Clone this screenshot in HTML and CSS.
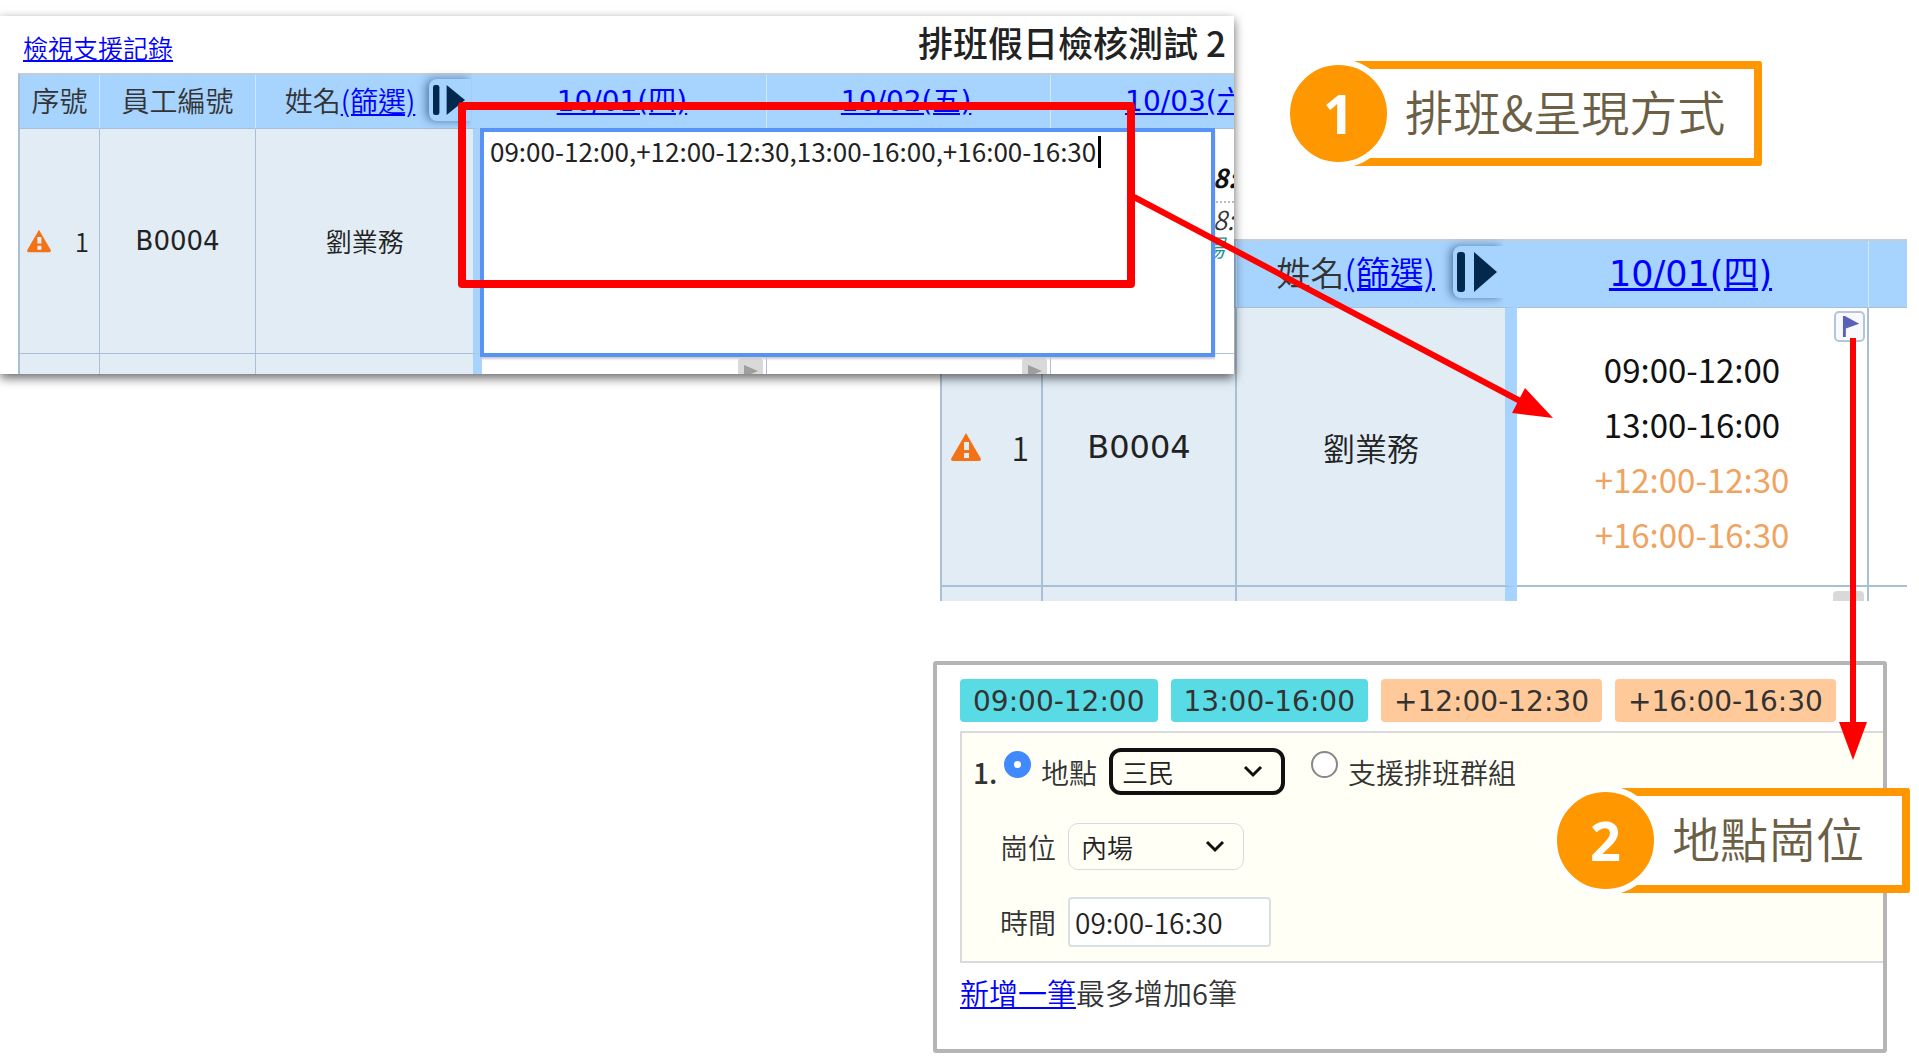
FILE: index.html
```
<!DOCTYPE html>
<html lang="zh-Hant">
<head>
    <meta charset="UTF-8">
    <meta name="viewport" content="width=device-width, initial-scale=1.0">
    <title>排班&amp;呈現方式</title>
    <link rel="stylesheet" href="styles.css">
</head>
<body>
<main class="slide">

    <!-- 排班結果 -->
    <section class="result">
        <table class="schedule schedule-large">
            <colgroup>
                <col class="col-no"><col class="col-id"><col class="col-name"><col class="col-day"><col>
            </colgroup>
            <thead>
                <tr>
                    <th></th>
                    <th></th>
                    <th class="name">
                        <div class="name-head">
                            <span>姓名<a href="#">(篩選)</a></span>
                            <button class="expand" aria-label="展開">
                                <svg viewBox="0 0 40 40" preserveAspectRatio="none"><rect x="0" y="0" width="8" height="40" rx="3"/><path d="M17 0l23 20-23 20z"/></svg>
                            </button>
                        </div>
                    </th>
                    <th class="day"><a href="#">10/01(四)</a></th>
                    <th></th>
                </tr>
            </thead>
            <tbody>
                <tr class="person">
                    <td class="fixed">
                        <div class="no">
                            <svg class="warn" viewBox="0 0 32 30"><path d="M16 1L31 27q0 2-2 2H3q-2 0-2-2z"/><path class="mark" d="M14 10h5v8h-5zM14 21h5v5h-5z"/></svg>
                            <span>1</span>
                        </div>
                    </td>
                    <td class="fixed code">B0004</td>
                    <td class="fixed name">劉業務</td>
                    <td class="shift">
                        <button class="flag" aria-label="地點崗位">
                            <svg viewBox="0 0 20 24"><path d="M1 1h2l15 8-14 5v9H1z"/></svg>
                        </button>
                        <p>09:00-12:00</p>
                        <p>13:00-16:00</p>
                        <p class="plus">+12:00-12:30</p>
                        <p class="plus">+16:00-16:30</p>
                    </td>
                    <td></td>
                </tr>
                <tr class="next">
                    <td class="fixed"></td>
                    <td class="fixed"></td>
                    <td class="fixed name"></td>
                    <td class="shift"><button class="more" aria-label="更多"></button></td>
                    <td></td>
                </tr>
            </tbody>
        </table>
    </section>

    <!-- 排班輸入 -->
    <section class="editor">
        <header class="editor-head">
            <a href="#">檢視支援記錄</a>
            <h1>排班假日檢核測試 2</h1>
        </header>
        <table class="schedule">
            <colgroup>
                <col class="col-no"><col class="col-id"><col class="col-name"><col class="col-day"><col class="col-day"><col class="col-day">
            </colgroup>
            <thead>
                <tr>
                    <th>序號</th>
                    <th>員工編號</th>
                    <th class="name">
                        <div class="name-head">
                            <span>姓名<a href="#">(篩選)</a></span>
                            <button class="expand" aria-label="展開">
                                <svg viewBox="0 0 40 40" preserveAspectRatio="none"><rect x="0" y="0" width="8" height="40" rx="3"/><path d="M17 0l23 20-23 20z"/></svg>
                            </button>
                        </div>
                    </th>
                    <th class="day"><a href="#">10/01(四)</a></th>
                    <th class="day"><a href="#">10/02(五)</a></th>
                    <th class="day"><a href="#">10/03(六)</a></th>
                </tr>
            </thead>
            <tbody>
                <tr class="person">
                    <td class="fixed">
                        <div class="no">
                            <svg class="warn" viewBox="0 0 32 30"><path d="M16 1L31 27q0 2-2 2H3q-2 0-2-2z"/><path class="mark" d="M14 10h5v8h-5zM14 21h5v5h-5z"/></svg>
                            <span>1</span>
                        </div>
                    </td>
                    <td class="fixed code">B0004</td>
                    <td class="fixed name">劉業務</td>
                    <td></td>
                    <td></td>
                    <td class="old-shift">
                        <p class="old-main">8:</p>
                        <p class="old-sub">8:</p>
                        <p class="old-place">場</p>
                    </td>
                </tr>
                <tr class="next">
                    <td class="fixed"></td>
                    <td class="fixed"></td>
                    <td class="fixed name"></td>
                    <td class="shift"><button class="more" aria-label="更多"></button></td>
                    <td class="shift"><button class="more" aria-label="更多"></button></td>
                    <td></td>
                </tr>
            </tbody>
        </table>
        <textarea class="shift-input" aria-label="班別" spellcheck="false">09:00-12:00,+12:00-12:30,13:00-16:00,+16:00-16:30</textarea>
        <span class="caret"></span>
    </section>

    <!-- 地點崗位設定 -->
    <section class="place">
        <div class="chips">
            <span class="chip">09:00-12:00</span>
            <span class="chip">13:00-16:00</span>
            <span class="chip chip-plus">+12:00-12:30</span>
            <span class="chip chip-plus">+16:00-16:30</span>
        </div>
        <form class="place-form">
            <div class="line">
                <b>1.</b>
                <input type="radio" name="kind" id="kind-place" checked>
                <label for="kind-place">地點</label>
                <select class="focused" aria-label="地點"><option>三民</option></select>
                <input type="radio" name="kind" id="kind-group">
                <label for="kind-group">支援排班群組</label>
            </div>
            <div class="line indent">
                <label for="post">崗位</label>
                <select id="post"><option>內場</option></select>
            </div>
            <div class="line indent">
                <label for="time">時間</label>
                <input type="text" id="time" value="09:00-16:30">
            </div>
        </form>
        <p class="add"><a href="#">新增一筆</a>最多增加6筆</p>
    </section>

    <!-- 標註 -->
    <div class="callout callout-one">
        <span class="number">1</span>
        <h2>排班&amp;呈現方式</h2>
    </div>
    <div class="callout callout-two">
        <span class="number">2</span>
        <h2>地點崗位</h2>
    </div>

    <!-- 紅框與箭頭 -->
    <svg class="marks" width="1919" height="1056" viewBox="0 0 1919 1056">
        <rect x="462" y="106" width="669" height="178"/>
        <path d="M1134 197L1522 402M1853 338V725"/>
        <path class="head" d="M1553 418L1512 413L1525 388zM1853 760L1839 722H1867z"/>
    </svg>
</main>
</body>
</html>
```
FILE: styles.css
```
* {
    box-sizing: border-box;
}

body {
    margin: 0;
    background: #fff;
    color: #333;
    font-family: "Noto Sans CJK TC", "Noto Sans", sans-serif;
    font-size: 28px;
    font-weight: 350;
}

a {
    color: #0000ff;
}

p, h1, h2 {
    margin: 0;
}

button, select, input, textarea {
    font-family: inherit;
    font-weight: inherit;
    color: inherit;
}

.slide {
    position: relative;
    min-height: 100vh;
    overflow: hidden;
}

/* 班表 */
.schedule {
    width: 1317px;
    table-layout: fixed;
    border-spacing: 0;
    border-left: 2px solid #a9bfd5;
    border-top: 2px solid #c4ccd4;
}

.schedule th,
.schedule td {
    padding: 0;
    border-right: 1px solid #a9bfd5;
    border-bottom: 1px solid #a9bfd5;
    text-align: center;
    font-weight: 350;
    line-height: 1;
}

.schedule th {
    height: 54px;
    padding-bottom: 4px;
    background: #a7d3ff;
    border-right-color: #d3e8fc;
}

.schedule .day {
    padding: 0 4px 0 0;
}

.schedule .day,
.schedule .code {
    font-family: "DejaVu Sans", "Noto Sans CJK TC", sans-serif;
    font-weight: 400;
}

.schedule .name {
    border-right: 9px solid #a7d3ff;
}

.schedule .fixed {
    background: #e1ecf5;
    color: #222;
}

.col-no { width: 80px; }
.col-id { width: 156px; }
.col-name { width: 226px; }
.col-day { width: 284px; }

.person td {
    height: 225px;
    font-size: 26px;
}

.next td {
    height: 40px;
    vertical-align: top;
}

.name-head {
    display: flex;
    align-items: center;
    justify-content: flex-end;
    gap: 14px;
    padding-right: 2px;
}

.expand {
    flex: none;
    width: 42px;
    height: 42px;
    padding: 6px 6px 6px 4px;
    border: 0;
    border-radius: 8px 0 0 8px;
    background: #a7d3ff;
    box-shadow: -3px 0 8px rgba(0, 40, 80, .5);
    clip-path: inset(-10px 0 -10px -14px);
}

.expand svg {
    display: block;
    width: 100%;
    height: 100%;
    fill: #00294d;
}

.no {
    display: flex;
    align-items: center;
    justify-content: space-between;
    padding: 0 10px 0 6px;
}

.warn {
    width: 26px;
    height: 24px;
    fill: #f37216;
}

.warn .mark {
    fill: #e1ecf5;
}

.shift {
    position: relative;
}

.more {
    position: absolute;
    top: 4px;
    right: 3px;
    width: 25px;
    height: 26px;
    padding: 0;
    border: 0;
    border-radius: 4px;
    background: #d9d9d9;
}

.more::after {
    content: "";
    display: block;
    width: 0;
    margin-left: 6px;
    border-left: 14px solid #9e9e9e;
    border-top: 6px solid transparent;
    border-bottom: 6px solid transparent;
}

/* 輸入畫面 */
.editor {
    position: absolute;
    left: 0;
    top: 16px;
    width: 1234px;
    height: 358px;
    overflow: hidden;
    background: #fff;
    box-shadow: 0 4px 10px rgba(0, 0, 0, .6);
}

.editor-head {
    display: flex;
    align-items: flex-start;
    height: 57px;
    padding-left: 23px;
    white-space: nowrap;
}

.editor-head a {
    flex: none;
    width: 895px;
    font-size: 25px;
    line-height: 62px;
}

.editor-head h1 {
    color: #222;
    font-size: 35px;
    font-weight: 500;
    line-height: 52px;
}

.editor .schedule {
    margin-left: 18px;
}

.schedule .old-shift {
    padding: 32px 0 0 150px;
    text-align: left;
    vertical-align: top;
    font-style: italic;
    line-height: 32px;
}

.old-main {
    padding: 0 0 8px 12px;
    border-bottom: 2px dotted #bbb;
    color: #111;
    font-weight: 700;
}

.old-sub {
    padding-left: 12px;
}

.old-place {
    color: #1b9090;
    font-size: 24px;
    line-height: 24px;
}

.shift-input {
    position: absolute;
    left: 480px;
    top: 112px;
    width: 735px;
    height: 229px;
    padding: 0 6px;
    border: 4px solid #5793f6;
    outline: 0;
    resize: none;
    background: #fff;
    box-shadow: 0 2px 2px #ccc;
    color: #222;
    font-size: 26px;
    font-weight: 400;
    line-height: 38px;
}

.caret {
    position: absolute;
    left: 1098px;
    top: 120px;
    width: 3px;
    height: 32px;
    background: #000;
}

/* 結果畫面 */
.result {
    position: absolute;
    left: 940px;
    right: 12px;
    top: 239px;
    height: 362px;
    overflow: hidden;
}

.schedule-large {
    width: 100%;
}

.schedule-large .col-no { width: 101px; }
.schedule-large .col-id { width: 194px; }
.schedule-large .col-name { width: 280px; }
.schedule-large .col-day { width: 352px; }

.schedule-large th {
    height: 67px;
    font-size: 34px;
}

.schedule-large .day {
    font-size: 35px;
}

.schedule-large td {
    border-right-width: 2px;
    border-bottom-width: 2px;
}

.schedule-large tr > :last-child {
    border-right: 0;
}

.schedule-large .person td {
    height: 279px;
    font-size: 32px;
}

.schedule-large .name {
    border-right-width: 12px;
}

.schedule-large .name-head {
    gap: 18px;
}

.schedule-large .expand {
    width: 50px;
    height: 52px;
}

.schedule-large .no {
    padding: 0 12px 0 8px;
}

.schedule-large .warn {
    width: 32px;
    height: 30px;
}

.schedule-large .shift p {
    padding-top: 9px;
    color: #111;
    font-size: 33px;
    font-weight: 400;
    line-height: 46px;
}

.schedule-large .shift .plus {
    color: #f0a35f;
}

.schedule-large .more {
    width: 31px;
    height: 31px;
}

.flag {
    position: absolute;
    top: 3px;
    right: 2px;
    width: 31px;
    height: 31px;
    padding: 2px 6px;
    border: 2px solid #b3c6d8;
    border-radius: 5px;
    background: #f7f9fd;
}

.flag svg {
    display: block;
    height: 23px;
    fill: #5b61b8;
}

/* 地點崗位 */
.place {
    position: absolute;
    left: 933px;
    right: 32px;
    top: 661px;
    padding: 14px 0 35px 23px;
    border: 4px solid #b5b5b5;
    border-radius: 3px;
    background: #fff;
}

.chips {
    display: flex;
    gap: 13px;
}

.chip {
    padding: 3px 13px 0;
    border-radius: 4px;
    background: #59dbe6;
    color: #333;
    font-family: "DejaVu Sans", sans-serif;
    font-size: 28px;
    font-weight: 400;
    line-height: 40px;
}

.place-form {
    display: flex;
    flex-direction: column;
    gap: 28px;
    margin-top: 9px;
    padding: 15px 0 16px 11px;
    border: 2px solid #dadada;
    border-right: 0;
    background: #fffff5;
}

.chip-plus {
    background: #ffc999;
}

.line {
    display: flex;
    align-items: center;
    height: 47px;
    color: #333;
}

.line b {
    width: 31px;
    font-weight: 500;
}

.line label {
    margin-left: 10px;
}

.line.indent {
    padding-left: 17px;
}

.line select,
.line input[type="text"] {
    margin-left: 12px;
    height: 47px;
    color: #222;
}

.line select {
    width: 176px;
    padding: 0 12px;
    appearance: none;
    border: 1px solid #d5dcdf;
    border-radius: 10px;
    background: url("data:image/svg+xml,%3Csvg xmlns='http://www.w3.org/2000/svg' width='20' height='13'%3E%3Cpath d='M2 2l8 8 8-8' fill='none' stroke='%23111' stroke-width='3'/%3E%3C/svg%3E") no-repeat right 18px center;
    font-size: 26px;
}

.line .focused {
    margin-right: 26px;
    padding: 0 9px;
    border: 4px solid #111;
    border-radius: 12px;
}

.line input[type="text"] {
    width: 203px;
    height: 50px;
    padding: 0 5px;
    border: 2px solid #d8e0e3;
    border-radius: 4px;
    background: #fff;
    font-size: 28px;
}

.line input[type="radio"] {
    width: 27px;
    height: 27px;
    margin: 0 0 14px;
    appearance: none;
    border: 2px solid #888;
    border-radius: 50%;
    background: #fff;
}

.line input[type="radio"]:checked {
    border: 10px solid #4189ff;
}

.add {
    margin-top: 8px;
    font-size: 29px;
    line-height: 43px;
    color: #333;
}

/* 標註 */
.callout {
    position: absolute;
    display: flex;
    align-items: center;
}

.callout-one {
    left: 1284px;
    top: 59px;
}

.callout-two {
    left: 1551px;
    top: 786px;
}

.number {
    z-index: 1;
    width: 109px;
    height: 109px;
    margin-right: -40px;
    border: 6px solid #fff;
    border-radius: 50%;
    background: #ff9800;
    color: #fff;
    font-family: "Open Sans", sans-serif;
    font-size: 54px;
    font-weight: 700;
    line-height: 97px;
    text-align: center;
}

.callout h2 {
    height: 105px;
    padding: 0 29px 0 52px;
    border: 8px solid #ff9800;
    border-left: 0;
    border-radius: 3px;
    background: #fff;
    color: #6b5f45;
    font-size: 48px;
    font-weight: 350;
    line-height: 83px;
}

.callout-two h2 {
    padding-right: 38px;
}

.marks {
    position: absolute;
    left: 0;
    top: 0;
    pointer-events: none;
    fill: none;
    stroke: #ff0000;
    stroke-width: 6;
}

.marks rect {
    stroke-width: 8;
    stroke-linejoin: round;
}

.marks .head {
    fill: #ff0000;
    stroke: none;
}
```
